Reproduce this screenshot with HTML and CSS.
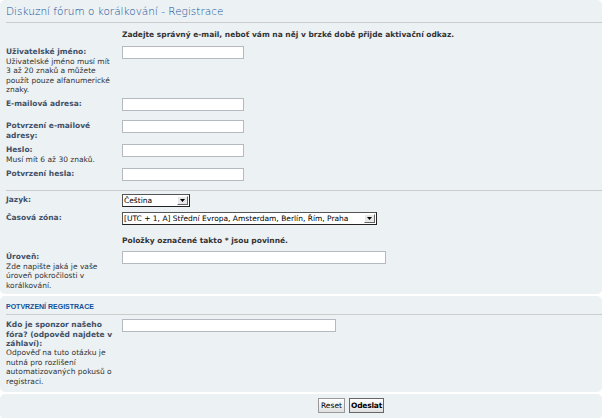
FILE: index.html
```html
<!DOCTYPE html>
<html lang="cs">
<head>
  <meta charset="UTF-8" />
  <meta name="viewport" content="width=device-width, initial-scale=1.0" />
  <title>Registrace</title>
  <link rel="stylesheet" href="styles.css">
</head>
<body>
  <form class="register">
    <div class="panel">
      <h2 class="title">Diskuzní fórum o korálkování - Registrace</h2>

      <p class="notice">Zadejte správný e-mail, neboť vám na něj v brzké době přijde aktivační odkaz.</p>

      <dl class="row">
        <dt><label for="username">Uživatelské jméno:</label><br><span class="explain">Uživatelské jméno musí mít 3 až 20 znaků a můžete použít pouze alfanumerické znaky.</span></dt>
        <dd><input type="text" id="username" class="inputbox short" /></dd>
      </dl>
      <dl class="row">
        <dt><label for="email">E-mailová adresa:</label></dt>
        <dd><input type="text" id="email" class="inputbox short" /></dd>
      </dl>
      <dl class="row">
        <dt><label for="email_confirm">Potvrzení e-mailové adresy:</label></dt>
        <dd><input type="text" id="email_confirm" class="inputbox short" /></dd>
      </dl>
      <dl class="row">
        <dt><label for="new_password">Heslo:</label><br><span class="explain">Musí mít 6 až 30 znaků.</span></dt>
        <dd><input type="password" id="new_password" class="inputbox short" /></dd>
      </dl>
      <dl class="row">
        <dt><label for="password_confirm">Potvrzení hesla:</label></dt>
        <dd><input type="password" id="password_confirm" class="inputbox short" /></dd>
      </dl>

      <hr>

      <dl class="row">
        <dt><label for="lang">Jazyk:</label></dt>
        <dd>
          <span class="select-box lang">
            <select id="lang"><option>Čeština</option></select>
            <span class="arrow"><svg width="5" height="3" viewBox="0 0 5 3"><path d="M0 0h5L2.5 3z" fill="#000"/></svg></span>
          </span>
        </dd>
      </dl>
      <dl class="row">
        <dt><label for="tz">Časová zóna:</label></dt>
        <dd>
          <span class="select-box tz">
            <select id="tz"><option>[UTC + 1, A] Střední Evropa, Amsterdam, Berlín, Řím, Praha</option></select>
            <span class="arrow"><svg width="5" height="3" viewBox="0 0 5 3"><path d="M0 0h5L2.5 3z" fill="#000"/></svg></span>
          </span>
        </dd>
      </dl>

      <p class="notice required">Položky označené takto * jsou povinné.</p>

      <dl class="row">
        <dt><label for="pf_uroven">Úroveň:</label><br><span class="explain">Zde napište jaká je vaše úroveň pokročilosti v korálkování.</span></dt>
        <dd><input type="text" id="pf_uroven" class="inputbox wide" /></dd>
      </dl>
    </div>

    <div class="panel confirm">
      <h3>Potvrzení registrace</h3>
      <dl class="row">
        <dt><label for="qa_answer">Kdo je sponzor našeho fóra? (odpověd najdete v záhlaví):</label><br><span class="explain">Odpověď na tuto otázku je nutná pro rozlišení automatizovaných pokusů o registraci.</span></dt>
        <dd><input type="text" id="qa_answer" class="inputbox medium" /></dd>
      </dl>
    </div>

    <div class="panel buttons">
      <input type="reset" value="Reset" class="button2" />
      <input type="submit" value="Odeslat" class="button1" />
    </div>
  </form>
</body>
</html>
```

FILE: styles.css
```css
html, body {
  margin: 0;
  padding: 0;
  background: #fff;
  font-family: "DejaVu Sans", Verdana, sans-serif;
  font-size: 7.5px;
  color: #333;
}

.panel {
  display: flow-root;
  background-color: #ecf1f3;
  border-radius: 5px;
  padding: 0 0 0 6px;
  margin-bottom: 2px;
}

.title {
  margin: 0;
  padding: 4px 0 4px;
  font-weight: 200;
  font-size: 10.5px;
  line-height: 14px;
  color: #115098;
  border-bottom: 1px solid #ccc;
}

.notice {
  margin: 7px 0 7px 116px;
  font-weight: bold;
  line-height: 9.4px;
  color: #333;
}

.notice.required {
  margin: 10px 0 6px 116px;
}

.row {
  display: flex;
  margin: 0 0 4px;
}

.row dt {
  width: 110px;
  margin-right: 6px;
  padding-top: 1px;
  line-height: 9.4px;
}

.row dt label {
  font-weight: bold;
  color: #425067;
}

.explain {
  color: #333;
}

.row dd {
  margin: 0;
}

.inputbox {
  display: block;
  box-sizing: border-box;
  height: 13px;
  margin: 0 0 5px;
  padding: 0 2px;
  border: 1px solid #b4bac0;
  background: #fff;
  font: 7.5px "DejaVu Sans", sans-serif;
}

.short { width: 122px; }
.wide { width: 264px; }
.medium { width: 214px; }

hr {
  margin: 0 0 3px;
  border: 0;
  border-top: 1px solid #ccc;
  height: 0;
}

.select-box {
  display: flex;
  box-sizing: border-box;
  height: 13px;
  margin-bottom: 1px;
  border: 1px solid #555;
  border-right-color: #222;
  border-bottom-color: #222;
  background: #fff;
}

.select-box.lang { width: 68px; }
.select-box.tz { width: 255px; }

.select-box select {
  flex: 1;
  min-width: 0;
  -webkit-appearance: none;
  appearance: none;
  border: 0;
  outline: 0;
  padding: 0 1px;
  margin: 0;
  background: transparent;
  font: 7.5px "DejaVu Sans", sans-serif;
  color: #000;
}

.select-box .arrow {
  display: flex;
  align-items: center;
  justify-content: center;
  width: 9px;
  margin: 1px;
  background: #e8e8e8;
  border: 1px solid #fff;
  border-right-color: #666;
  border-bottom-color: #666;
}

.confirm h3 {
  margin: 0;
  padding: 7px 0 3px;
  font-family: "Liberation Sans", Arial, sans-serif;
  font-size: 7px;
  line-height: 8px;
  font-weight: bold;
  text-transform: uppercase;
  color: #115098;
  border-bottom: 1px solid #ccc;
}

.confirm .row {
  margin: 4px 0 0;
  padding-bottom: 6px;
}

.buttons {
  display: flex;
  gap: 4px;
  padding: 4px 0 6px 318px;
  margin-bottom: 0;
}

.button1, .button2 {
  height: 15px;
  padding: 0 2px;
  font: 7.5px "DejaVu Sans", sans-serif;
  color: #000;
  border: 1px solid #999;
  background: linear-gradient(#fff, #e0e0e0);
  cursor: pointer;
}

.button1 {
  padding: 0 1px;
  font-weight: bold;
  letter-spacing: -0.2px;
  border-color: #666;
}
```
